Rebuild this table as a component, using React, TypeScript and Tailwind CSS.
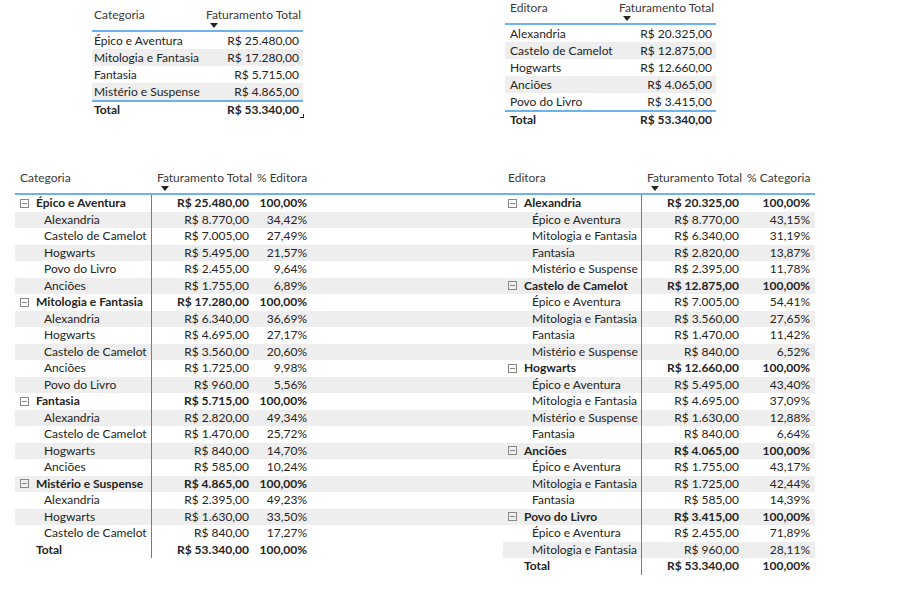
import React from "react";

type Group = { name: string; value: string; pct: string; items: [string, string, string][] };

const byCategoria: [string, string][] = [
  ["Épico e Aventura", "R$ 25.480,00"],
  ["Mitologia e Fantasia", "R$ 17.280,00"],
  ["Fantasia", "R$ 5.715,00"],
  ["Mistério e Suspense", "R$ 4.865,00"],
];

const byEditora: [string, string][] = [
  ["Alexandria", "R$ 20.325,00"],
  ["Castelo de Camelot", "R$ 12.875,00"],
  ["Hogwarts", "R$ 12.660,00"],
  ["Anciões", "R$ 4.065,00"],
  ["Povo do Livro", "R$ 3.415,00"],
];

const categoriaEditora: Group[] = [
  {
    name: "Épico e Aventura",
    value: "R$ 25.480,00",
    pct: "100,00%",
    items: [
      ["Alexandria", "R$ 8.770,00", "34,42%"],
      ["Castelo de Camelot", "R$ 7.005,00", "27,49%"],
      ["Hogwarts", "R$ 5.495,00", "21,57%"],
      ["Povo do Livro", "R$ 2.455,00", "9,64%"],
      ["Anciões", "R$ 1.755,00", "6,89%"],
    ],
  },
  {
    name: "Mitologia e Fantasia",
    value: "R$ 17.280,00",
    pct: "100,00%",
    items: [
      ["Alexandria", "R$ 6.340,00", "36,69%"],
      ["Hogwarts", "R$ 4.695,00", "27,17%"],
      ["Castelo de Camelot", "R$ 3.560,00", "20,60%"],
      ["Anciões", "R$ 1.725,00", "9,98%"],
      ["Povo do Livro", "R$ 960,00", "5,56%"],
    ],
  },
  {
    name: "Fantasia",
    value: "R$ 5.715,00",
    pct: "100,00%",
    items: [
      ["Alexandria", "R$ 2.820,00", "49,34%"],
      ["Castelo de Camelot", "R$ 1.470,00", "25,72%"],
      ["Hogwarts", "R$ 840,00", "14,70%"],
      ["Anciões", "R$ 585,00", "10,24%"],
    ],
  },
  {
    name: "Mistério e Suspense",
    value: "R$ 4.865,00",
    pct: "100,00%",
    items: [
      ["Alexandria", "R$ 2.395,00", "49,23%"],
      ["Hogwarts", "R$ 1.630,00", "33,50%"],
      ["Castelo de Camelot", "R$ 840,00", "17,27%"],
    ],
  },
];

const editoraCategoria: Group[] = [
  {
    name: "Alexandria",
    value: "R$ 20.325,00",
    pct: "100,00%",
    items: [
      ["Épico e Aventura", "R$ 8.770,00", "43,15%"],
      ["Mitologia e Fantasia", "R$ 6.340,00", "31,19%"],
      ["Fantasia", "R$ 2.820,00", "13,87%"],
      ["Mistério e Suspense", "R$ 2.395,00", "11,78%"],
    ],
  },
  {
    name: "Castelo de Camelot",
    value: "R$ 12.875,00",
    pct: "100,00%",
    items: [
      ["Épico e Aventura", "R$ 7.005,00", "54,41%"],
      ["Mitologia e Fantasia", "R$ 3.560,00", "27,65%"],
      ["Fantasia", "R$ 1.470,00", "11,42%"],
      ["Mistério e Suspense", "R$ 840,00", "6,52%"],
    ],
  },
  {
    name: "Hogwarts",
    value: "R$ 12.660,00",
    pct: "100,00%",
    items: [
      ["Épico e Aventura", "R$ 5.495,00", "43,40%"],
      ["Mitologia e Fantasia", "R$ 4.695,00", "37,09%"],
      ["Mistério e Suspense", "R$ 1.630,00", "12,88%"],
      ["Fantasia", "R$ 840,00", "6,64%"],
    ],
  },
  {
    name: "Anciões",
    value: "R$ 4.065,00",
    pct: "100,00%",
    items: [
      ["Épico e Aventura", "R$ 1.755,00", "43,17%"],
      ["Mitologia e Fantasia", "R$ 1.725,00", "42,44%"],
      ["Fantasia", "R$ 585,00", "14,39%"],
    ],
  },
  {
    name: "Povo do Livro",
    value: "R$ 3.415,00",
    pct: "100,00%",
    items: [
      ["Épico e Aventura", "R$ 2.455,00", "71,89%"],
      ["Mitologia e Fantasia", "R$ 960,00", "28,11%"],
    ],
  },
];

function SortArrow() {
  return (
    <div className="mt-[1px] ml-[4px] w-0 h-0 border-l-[4px] border-r-[4px] border-t-[5px] border-l-transparent border-r-transparent border-t-[#252423]" />
  );
}

function Minus() {
  return (
    <svg width="9" height="9" viewBox="0 0 9 9" className="shrink-0">
      <rect x="0.5" y="0.5" width="8" height="8" fill="none" stroke="#8a8886" />
      <line x1="2" y1="4.5" x2="7" y2="4.5" stroke="#8a8886" />
    </svg>
  );
}

// simple two-column table (top visuals)
function SimpleTable({ left, head, rows, firstPad }: { left: string; head: string; rows: [string, string][]; firstPad: string }) {
  return (
    <div className={`w-[211px] ${left}`}>
      <div className="flex h-[25px] border-b-2 border-[#6cb2ec] text-[#3b3a39]">
        <div className={`w-[109px] ${firstPad} leading-[15px]`}>{head}</div>
        <div className="w-[102px] pl-[5px] leading-[15px]">
          <div>Faturamento Total</div>
          <SortArrow />
        </div>
      </div>
      {rows.map(([name, value], i) => (
        <div key={name} className={`flex h-[17px] items-center ${i % 2 === 1 ? "bg-[#eeeeee]" : ""}`}>
          <div className={`w-[109px] ${firstPad}`}>{name}</div>
          <div className="w-[102px] pr-[4px] text-right">{value}</div>
        </div>
      ))}
      <div className="flex h-[17px] items-center border-t-2 border-[#6cb2ec] font-bold">
        <div className={`w-[109px] ${firstPad}`}>Total</div>
        <div className="w-[102px] pr-[4px] text-right">R$ 53.340,00</div>
      </div>
    </div>
  );
}

function Matrix({ left, head, pctHead, groups, c1, c3 }: { left: string; head: string; pctHead: string; groups: Group[]; c1: string; c3: string }) {
  const rows: { label: string; value: string; pct: string; group: boolean }[] = [];
  groups.forEach((g) => {
    rows.push({ label: g.name, value: g.value, pct: g.pct, group: true });
    g.items.forEach(([label, value, pct]) => rows.push({ label, value, pct, group: false }));
  });

  return (
    <div className={left}>
      <div className="flex h-[25px] border-b-2 border-[#6cb2ec] text-[#3b3a39] leading-[15px]">
        <div className={`${c1} pl-[5px]`}>{head}</div>
        <div className="w-[101px] pl-[5px]">
          <div>Faturamento Total</div>
          <SortArrow />
        </div>
        <div className={`${c3} pl-[4px]`}>{pctHead}</div>
      </div>
      {rows.map((r, i) => (
        <div key={i} className={`flex h-[16.5px] items-center ${r.group ? "font-bold" : ""} ${i % 2 === 1 ? "bg-[#eeeeee]" : ""}`}>
          <div className={`${c1} h-full flex items-center border-r border-[#3a8ad8] ${r.group ? "pl-[5px] gap-[7px]" : "pl-[29px]"}`}>
            {r.group && <Minus />}
            <span>{r.label}</span>
          </div>
          <div className="w-[101px] pr-[4px] text-right">{r.value}</div>
          <div className={`${c3} pr-[5px] text-right`}>{r.pct}</div>
        </div>
      ))}
      <div className="flex h-[16.5px] items-center font-bold">
        <div className={`${c1} h-full flex items-center border-r border-[#3a8ad8] pl-[21px]`}>Total</div>
        <div className="w-[101px] pr-[4px] text-right">R$ 53.340,00</div>
        <div className={`${c3} pr-[5px] text-right`}>100,00%</div>
      </div>
    </div>
  );
}

export default function App() {
  return (
    <div className="w-[897px] h-[590px] bg-white text-[#252423] text-[12px] leading-[16px] [font-family:Lato,'Liberation_Sans',sans-serif] whitespace-nowrap overflow-hidden">
      {/* top row */}
      <div className="flex h-[170px]">
        <div className="w-[505px] pt-[7px]">
          <SimpleTable left="ml-[92px]" head="Categoria" rows={byCategoria} firstPad="pl-[2px]" />
          <div className="ml-[300px] -mt-[3px] w-[4px] h-[4px] border-r border-b border-[#252423]" />
        </div>
        <div>
          <SimpleTable left="" head="Editora" rows={byEditora} firstPad="pl-[5px]" />
        </div>
      </div>

      {/* bottom row */}
      <div className="flex">
        <div className="w-[503px]">
          <Matrix left="ml-[15px]" head="Categoria" pctHead="% Editora" groups={categoriaEditora} c1="w-[137px]" c3="w-[59px]" />
        </div>
        <div>
          <Matrix left="" head="Editora" pctHead="% Categoria" groups={editoraCategoria} c1="w-[139px]" c3="w-[72px]" />
        </div>
      </div>
    </div>
  );
}
